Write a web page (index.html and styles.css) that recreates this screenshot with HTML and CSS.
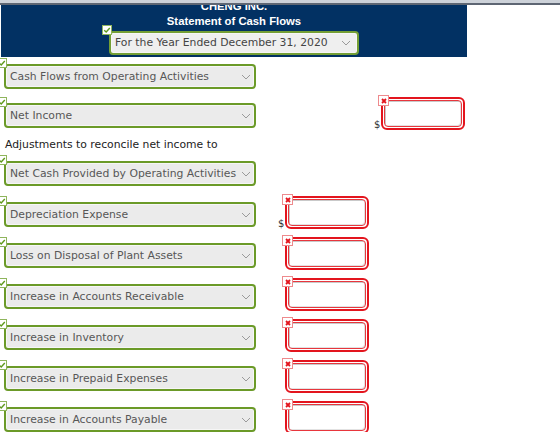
FILE: index.html
```html
<!DOCTYPE html>
<html lang="en">
<head>
<meta charset="utf-8">
<title>Cheng Inc. – Statement of Cash Flows</title>
<link rel="stylesheet" href="styles.css">
</head>
<body>
<div class="topbar"></div>
<header class="sheet-head">
  <div class="co">CHENG INC.</div>
  <div class="title">Statement of Cash Flows</div>
  <div class="period">
    <span class="ok"><svg viewBox="0 0 8 8" width="8" height="8"><path d="M1.2 4.2 L3.2 6 L6.8 2" fill="none" stroke="#5f9a1c" stroke-width="1.4"/></svg></span>
    <div class="select">For the Year Ended December 31, 2020<svg class="chev" viewBox="0 0 10 6" width="10" height="6"><path d="M1 1 L5 5 L9 1" fill="none" stroke="#9a9a9a" stroke-width="1"/></svg></div>
  </div>
</header>

<main class="lines">
  <div class="row first">
    <div class="field">
      <span class="ok"><svg viewBox="0 0 8 8" width="8" height="8"><path d="M1.2 4.2 L3.2 6 L6.8 2" fill="none" stroke="#5f9a1c" stroke-width="1.4"/></svg></span>
      <div class="select">Cash Flows from Operating Activities<svg class="chev" viewBox="0 0 10 6" width="10" height="6"><path d="M1 1 L5 5 L9 1" fill="none" stroke="#9a9a9a" stroke-width="1"/></svg></div>
    </div>
  </div>

  <div class="row ni">
    <div class="field">
      <span class="ok"><svg viewBox="0 0 8 8" width="8" height="8"><path d="M1.2 4.2 L3.2 6 L6.8 2" fill="none" stroke="#5f9a1c" stroke-width="1.4"/></svg></span>
      <div class="select">Net Income<svg class="chev" viewBox="0 0 10 6" width="10" height="6"><path d="M1 1 L5 5 L9 1" fill="none" stroke="#9a9a9a" stroke-width="1"/></svg></div>
    </div>
    <div class="cell col-b">
      <span class="cur">$</span>
      <div class="amt"><span class="bad"><svg viewBox="0 0 8 8" width="8" height="8"><path d="M2 2 L6 6 M6 2 L2 6" stroke="#e3151e" stroke-width="1.8"/></svg></span><div class="amt-in"></div></div>
    </div>
  </div>

  <p class="note">Adjustments to reconcile net income to</p>

  <div class="row netcash">
    <div class="field">
      <span class="ok"><svg viewBox="0 0 8 8" width="8" height="8"><path d="M1.2 4.2 L3.2 6 L6.8 2" fill="none" stroke="#5f9a1c" stroke-width="1.4"/></svg></span>
      <div class="select">Net Cash Provided by Operating Activities<svg class="chev" viewBox="0 0 10 6" width="10" height="6"><path d="M1 1 L5 5 L9 1" fill="none" stroke="#9a9a9a" stroke-width="1"/></svg></div>
    </div>
  </div>

  <div class="row">
    <div class="field">
      <span class="ok"><svg viewBox="0 0 8 8" width="8" height="8"><path d="M1.2 4.2 L3.2 6 L6.8 2" fill="none" stroke="#5f9a1c" stroke-width="1.4"/></svg></span>
      <div class="select">Depreciation Expense<svg class="chev" viewBox="0 0 10 6" width="10" height="6"><path d="M1 1 L5 5 L9 1" fill="none" stroke="#9a9a9a" stroke-width="1"/></svg></div>
    </div>
    <div class="cell">
      <span class="cur">$</span>
      <div class="amt"><span class="bad"><svg viewBox="0 0 8 8" width="8" height="8"><path d="M2 2 L6 6 M6 2 L2 6" stroke="#e3151e" stroke-width="1.8"/></svg></span><div class="amt-in"></div></div>
    </div>
  </div>

  <div class="row">
    <div class="field">
      <span class="ok"><svg viewBox="0 0 8 8" width="8" height="8"><path d="M1.2 4.2 L3.2 6 L6.8 2" fill="none" stroke="#5f9a1c" stroke-width="1.4"/></svg></span>
      <div class="select">Loss on Disposal of Plant Assets<svg class="chev" viewBox="0 0 10 6" width="10" height="6"><path d="M1 1 L5 5 L9 1" fill="none" stroke="#9a9a9a" stroke-width="1"/></svg></div>
    </div>
    <div class="cell">
      <span class="cur"></span>
      <div class="amt"><span class="bad"><svg viewBox="0 0 8 8" width="8" height="8"><path d="M2 2 L6 6 M6 2 L2 6" stroke="#e3151e" stroke-width="1.8"/></svg></span><div class="amt-in"></div></div>
    </div>
  </div>

  <div class="row">
    <div class="field">
      <span class="ok"><svg viewBox="0 0 8 8" width="8" height="8"><path d="M1.2 4.2 L3.2 6 L6.8 2" fill="none" stroke="#5f9a1c" stroke-width="1.4"/></svg></span>
      <div class="select">Increase in Accounts Receivable<svg class="chev" viewBox="0 0 10 6" width="10" height="6"><path d="M1 1 L5 5 L9 1" fill="none" stroke="#9a9a9a" stroke-width="1"/></svg></div>
    </div>
    <div class="cell">
      <span class="cur"></span>
      <div class="amt"><span class="bad"><svg viewBox="0 0 8 8" width="8" height="8"><path d="M2 2 L6 6 M6 2 L2 6" stroke="#e3151e" stroke-width="1.8"/></svg></span><div class="amt-in"></div></div>
    </div>
  </div>

  <div class="row">
    <div class="field">
      <span class="ok"><svg viewBox="0 0 8 8" width="8" height="8"><path d="M1.2 4.2 L3.2 6 L6.8 2" fill="none" stroke="#5f9a1c" stroke-width="1.4"/></svg></span>
      <div class="select">Increase in Inventory<svg class="chev" viewBox="0 0 10 6" width="10" height="6"><path d="M1 1 L5 5 L9 1" fill="none" stroke="#9a9a9a" stroke-width="1"/></svg></div>
    </div>
    <div class="cell">
      <span class="cur"></span>
      <div class="amt"><span class="bad"><svg viewBox="0 0 8 8" width="8" height="8"><path d="M2 2 L6 6 M6 2 L2 6" stroke="#e3151e" stroke-width="1.8"/></svg></span><div class="amt-in"></div></div>
    </div>
  </div>

  <div class="row">
    <div class="field">
      <span class="ok"><svg viewBox="0 0 8 8" width="8" height="8"><path d="M1.2 4.2 L3.2 6 L6.8 2" fill="none" stroke="#5f9a1c" stroke-width="1.4"/></svg></span>
      <div class="select">Increase in Prepaid Expenses<svg class="chev" viewBox="0 0 10 6" width="10" height="6"><path d="M1 1 L5 5 L9 1" fill="none" stroke="#9a9a9a" stroke-width="1"/></svg></div>
    </div>
    <div class="cell">
      <span class="cur"></span>
      <div class="amt"><span class="bad"><svg viewBox="0 0 8 8" width="8" height="8"><path d="M2 2 L6 6 M6 2 L2 6" stroke="#e3151e" stroke-width="1.8"/></svg></span><div class="amt-in"></div></div>
    </div>
  </div>

  <div class="row">
    <div class="field">
      <span class="ok"><svg viewBox="0 0 8 8" width="8" height="8"><path d="M1.2 4.2 L3.2 6 L6.8 2" fill="none" stroke="#5f9a1c" stroke-width="1.4"/></svg></span>
      <div class="select">Increase in Accounts Payable<svg class="chev" viewBox="0 0 10 6" width="10" height="6"><path d="M1 1 L5 5 L9 1" fill="none" stroke="#9a9a9a" stroke-width="1"/></svg></div>
    </div>
    <div class="cell">
      <span class="cur"></span>
      <div class="amt"><span class="bad"><svg viewBox="0 0 8 8" width="8" height="8"><path d="M2 2 L6 6 M6 2 L2 6" stroke="#e3151e" stroke-width="1.8"/></svg></span><div class="amt-in"></div></div>
    </div>
  </div>
</main>
</body>
</html>
```

FILE: styles.css
```css
html, body {
  margin: 0;
  padding: 0;
  height: 432px;
  overflow: hidden;
  background: #fff;
}

body {
  font-family: "DejaVu Sans", Verdana, sans-serif;
  font-size: 10.8px;
  color: #222;
}

/* window chrome strip above the sheet */
.topbar {
  height: 3px;
  background: #cdd2d9;
  border-bottom: 2px solid #5e6673;
}

/* navy statement heading */
.sheet-head {
  width: 466px;
  height: 52px;
  margin-left: 1px;
  background: #023163;
  color: #fff;
  text-align: center;
  overflow: hidden;
}

.sheet-head .co,
.sheet-head .title {
  font-family: "Liberation Sans", Arial, sans-serif;
  font-weight: bold;
  font-size: 11.3px;
  line-height: 15px;
}

.sheet-head .co {
  margin-top: -6px;
}

.period {
  position: relative;
  width: 250px;
  margin: 2px auto 0;
  text-align: left;
}

.period .select {
  height: 24px;
  line-height: 20px;
  color: #444;
  background: #efefef;
  border-color: #749f35;
  padding-right: 6px;
}

/* answer fields */
.field {
  position: relative;
  width: 252px;
  margin-left: 4px;
}

.select {
  box-sizing: border-box;
  display: flex;
  align-items: center;
  justify-content: space-between;
  height: 25px;
  line-height: 21px;
  padding: 0 3px 0 4px;
  border: 2px solid #6b9a28;
  border-radius: 4px;
  background: #ebebeb;
  box-shadow: inset 0 0 0 1px #f6f6f6;
  color: #575757;
  white-space: nowrap;
}

.chev {
  flex: none;
}

/* green "correct" marker on a field corner */
.ok {
  position: absolute;
  left: -7px;
  top: -6px;
  z-index: 1;
  box-sizing: border-box;
  width: 10px;
  height: 10px;
  border: 1px solid #8fb55c;
  background: #fff;
  display: flex;
  align-items: center;
  justify-content: center;
}

.ok svg {
  display: block;
}

/* statement lines */
.lines {
  display: flex;
  flex-direction: column;
}

.row {
  display: grid;
  grid-template-columns: 256px 96px 96px;
  align-items: start;
  height: 25px;
  margin-top: 16px;
}

.row.first {
  margin-top: 7px;
}

.row.ni {
  margin-top: 14px;
}

.row.netcash {
  margin-top: 9px;
}

.note {
  margin: 10px 0 0 5px;
  line-height: 14px;
  color: #222;
}

.cell {
  display: flex;
  align-items: flex-end;
  gap: 1px;
  margin-top: -6px;
  padding-left: 22px;
}

.col-b {
  grid-column: 3;
}

.cur {
  flex: none;
  width: 6px;
  font-size: 10px;
  line-height: 10px;
  color: #333;
}

/* amount input flagged incorrect */
.amt {
  position: relative;
  flex: none;
  box-sizing: border-box;
  width: 84px;
  height: 33px;
  padding: 1px;
  border: 2px solid #e3151e;
  border-radius: 6px;
  background: #fff;
}

.amt-in {
  box-sizing: border-box;
  height: 100%;
  border: 1px solid #e8363d;
  border-radius: 4px;
  background: #fff;
  box-shadow: inset 1px 1px 0 #c9c9c9, inset -1px -1px 0 #e2e2e2;
}

.bad {
  position: absolute;
  left: -5px;
  top: -4px;
  z-index: 1;
  box-sizing: border-box;
  width: 11px;
  height: 11px;
  border: 1px solid #ee8a8d;
  background: #fff;
  display: flex;
  align-items: center;
  justify-content: center;
}

.bad svg {
  display: block;
}
```
